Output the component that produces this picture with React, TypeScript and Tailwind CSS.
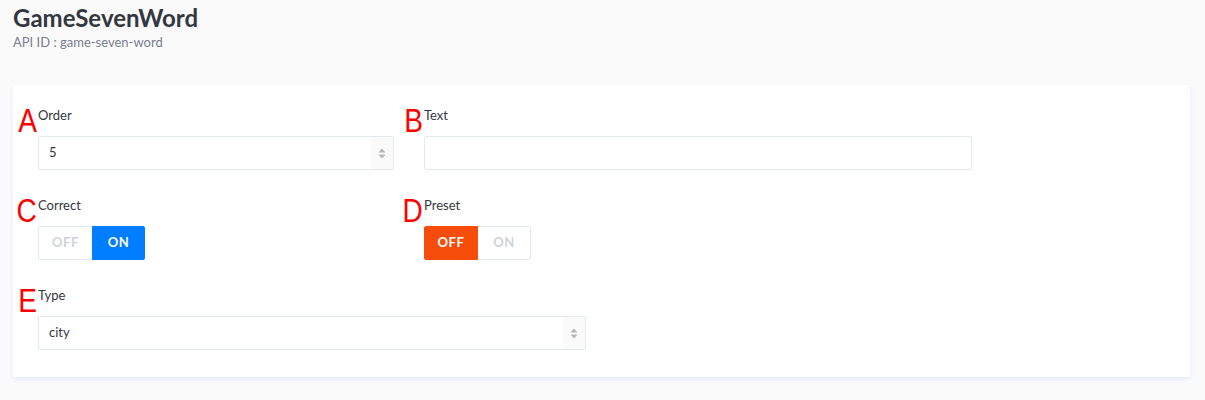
import React from "react";

const lato = { fontFamily: "Lato, 'Open Sans', sans-serif" };

// red annotation letter that sits left of a field label
const Mark = ({ ch }: { ch: string }) => (
    <span
        className="absolute right-full top-[-2px] mr-[1px] text-[33px] leading-none text-[#ff0000] origin-right scale-x-[0.85]"
        style={{ fontFamily: "'Liberation Sans', Arial, sans-serif" }}
    >
        {ch}
    </span>
);

const Label = ({ mark, text }: { mark: string; text: string }) => (
    <div className="relative h-[18px] mb-[12px] text-[13px] leading-[18px] text-[#333740]">
        <Mark ch={mark} />
        {text}
    </div>
);

const Arrows = () => (
    <div className="w-[22px] h-full bg-[#fafafb] flex items-center justify-center rounded-r-[2px]">
        <svg width="8" height="11" viewBox="0 0 8 11">
            <path d="M4 0.5 L7.5 4.5 H0.5 Z" fill="#b3b5b9" />
            <path d="M4 10.5 L7.5 6.5 H0.5 Z" fill="#b3b5b9" />
        </svg>
    </div>
);

const Toggle = ({ on, color }: { on: boolean; color: string }) => (
    <div className="flex w-[107px] h-[34px] text-[13px] font-bold tracking-[0.6px]">
        <div
            className={`w-[54px] flex items-center justify-center rounded-l-[2px] border ${on ? "border-[#e3e9f3] border-r-0 text-[#ced3db] bg-white" : "text-white"}`}
            style={!on ? { backgroundColor: color, borderColor: color } : undefined}
        >
            OFF
        </div>
        <div
            className={`w-[53px] flex items-center justify-center rounded-r-[2px] border ${on ? "text-white" : "border-[#e3e9f3] border-l-0 text-[#ced3db] bg-white"}`}
            style={on ? { backgroundColor: color, borderColor: color } : undefined}
        >
            ON
        </div>
    </div>
);

export default function App() {
    return (
        <div className="min-h-screen w-full bg-[#fafafb] px-[13px]" style={lato}>
            {/* Header */}
            <h1 className="pt-[3px] text-[24px] leading-[29px] font-bold text-[#333740]">GameSevenWord</h1>
            <p className="mt-[1px] text-[13px] leading-[18px] text-[#787e8f]">API ID : game-seven-word</p>

            {/* Form card */}
            <div className="mt-[34px] bg-white rounded-[2px] shadow-[0_2px_4px_0_#e3e9f3] pt-[21px] pb-[27px] pl-[25px] pr-[25px] mr-[2px]">
                <div className="flex gap-x-[30px]">
                    <div className="w-[356px]">
                        <Label mark="A" text="Order" />
                        <div className="flex h-[34px] border border-[#e3e9f3] rounded-[2px] bg-white">
                            <div className="flex-1 pl-[10px] flex items-center text-[13px] text-[#333740]">5</div>
                            <Arrows />
                        </div>
                    </div>
                    <div className="w-[548px]">
                        <Label mark="B" text="Text" />
                        <div className="h-[34px] border border-[#e3e9f3] rounded-[2px] bg-white" />
                    </div>
                </div>

                <div className="flex gap-x-[30px] mt-[26px]">
                    <div className="w-[356px]">
                        <Label mark="C" text="Correct" />
                        <Toggle on={true} color="#007eff" />
                    </div>
                    <div className="w-[548px]">
                        <Label mark="D" text="Preset" />
                        <Toggle on={false} color="#f64d0a" />
                    </div>
                </div>

                <div className="mt-[26px] w-[548px]">
                    <Label mark="E" text="Type" />
                    <div className="flex h-[34px] border border-[#e3e9f3] rounded-[2px] bg-white">
                        <div className="flex-1 pl-[10px] flex items-center text-[13px] text-[#333740]">city</div>
                        <Arrows />
                    </div>
                </div>
            </div>
        </div>
    );
}
